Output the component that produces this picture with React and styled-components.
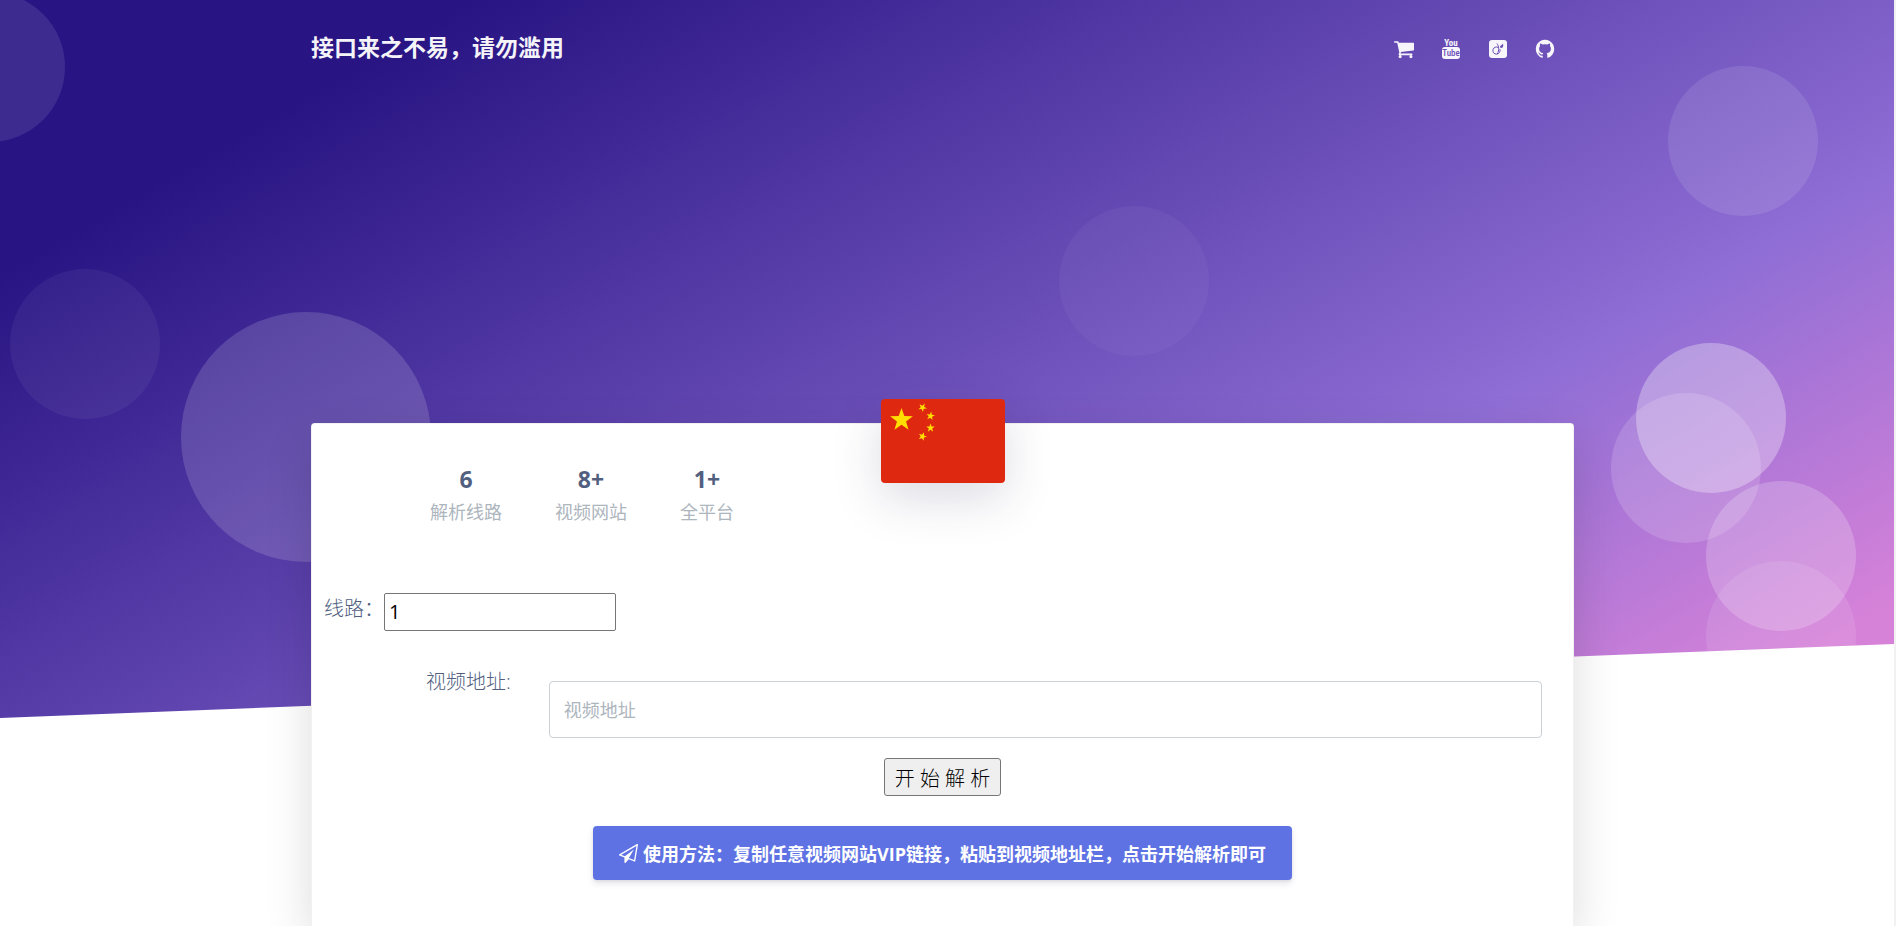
import React, { useState } from "react";
import styled, { createGlobalStyle } from "styled-components";

const stats = [
  { value: "6", label: "解析线路" },
  { value: "8+", label: "视频网站" },
  { value: "1+", label: "全平台" },
];

const bubbles = [
  { size: 150, top: "-8px", left: "-85px", alpha: 0.1 },
  { size: 150, top: "66px", right: "4%", alpha: 0.1 },
  { size: 150, top: "343px", right: "108px", alpha: 0.3 },
  { size: 150, top: "393px", right: "7%", alpha: 0.15 },
  { size: 150, top: "269px", left: "10px", alpha: 0.05 },
  { size: 250, top: "312px", left: "181px", alpha: 0.15 },
  { size: 150, top: "206px", right: "685px", alpha: 0.04 },
  { size: 150, top: "481px", right: "2%", alpha: 0.2 },
  { size: 150, top: "561px", right: "2%", alpha: 0.1 },
];

const CartIcon = () => (
  <svg viewBox="0 0 1664 1792" fill="currentColor" aria-hidden="true">
    <path d="M640 1536q0 52-38 90t-90 38-90-38-38-90 38-90 90-38 90 38 38 90zm896 0q0 52-38 90t-90 38-90-38-38-90 38-90 90-38 90 38 38 90zm128-1088v512q0 24-16.5 42.500t-40.500 21.500l-1044 122q13 60 13 70 0 16-24 64h920q26 0 45 19t19 45-19 45-45 19h-1024q-26 0-45-19t-19-45q0-11 8-31.500t16-36 21.500-40 15.500-29.500l-177-823h-204q-26 0-45-19t-19-45 19-45 45-19h256q16 0 28.500 6.500t19.500 15.500 13 24.500 8 26 5.500 29.500 4.500 26h1201q26 0 45 19t19 45z" />
  </svg>
);

const YoutubeIcon = () => (
  <svg viewBox="0 0 20 22" aria-hidden="true">
    <g
      fontFamily="'Roboto Condensed', 'Liberation Sans Narrow', Roboto, sans-serif"
      textAnchor="middle"
    >
      <text x="10" y="8" fontSize="9" fontWeight="700" fill="currentColor">
        You
      </text>
      <rect x="1" y="9" width="18" height="12" rx="3" fill="currentColor" />
      <text x="10" y="18" fontSize="9" fontWeight="500" fill="#6d50b8">
        Tube
      </text>
    </g>
  </svg>
);

const ViadeoIcon = () => (
  <svg viewBox="0 0 20 22" fill="none" aria-hidden="true">
    <rect x="1" y="2" width="18" height="18" rx="3" fill="currentColor" />
    <path
      d="M10.500 9.600a3.600 3.600 0 1 0 1.300 1.600M9 5.500c1.800 2.500 2.600 6.500 .2 10.500"
      stroke="#6d50b8"
      strokeWidth="1"
    />
    <path
      d="M15 5.500c.6 2 .2 4.300-1.500 4.600-.9 .1-1.500-.6-1.400-1.500 .1-1.500 2.200-1.200 2.900-3.100z"
      fill="#6d50b8"
    />
  </svg>
);

const GithubIcon = () => (
  <svg viewBox="64 0 1664 1792" fill="currentColor" aria-hidden="true">
    <path d="M1664 896q0 251-146.500 451.500t-378.500 277.500q-27 5-39.500-7t-12.500-30v-211q0-97-52-142 57-6 102.500-18t94-39 81-66.500 53-105 20.500-150.500q0-121-79-206 37-91-8-204-28-9-81 11t-92 44l-38 24q-93-26-192-26t-192 26q-16-11-42.500-27t-83.500-38.500-86-13.500q-44 113-7 204-79 85-79 206 0 85 20.500 150t52.500 105 80.500 67 94 39 102.500 18q-40 36-49 103-21 10-45 15t-57 5-65.500-21.500-55.500-62.500q-19-32-48.500-52t-49.500-24l-20-3q-21 0-29 4.500t-5 11.500 9 14 13 12l7 5q22 10 43.500 38t31.500 51l10 23q13 38 44 61.500t67 30 69.500 7 55.500-3.500l23-4q0 38 .5 89t.5 54q0 18-13 30t-40 7q-232-77-378.500-277.500t-146.500-451.500q0-209 103-385.500t279.500-279.500 385.500-103 385.500 103 279.500 279.500 103 385.500z" />
  </svg>
);

const PlaneIcon = () => (
  <svg viewBox="0 0 1792 1792" fill="currentColor" aria-hidden="true">
    <path d="M1764 11q33 24 27 64l-256 1536q-5 29-32 45-14 8-31 8-11 0-24-5l-527-215-298 327q-18 21-47 21-14 0-23-4-19-7-30-23.500t-11-36.500v-452l-472-193q-37-14-40-55-3-39 32-59l1664-960q35-21 68 2zm-342 1499l221-1323-1434 827 336 137 863-639-478 797z" />
  </svg>
);

const starPoints = (cx, cy, r, turn = -90) =>
  Array.from({ length: 10 }, (_, i) => {
    const radius = i % 2 ? r * 0.4 : r;
    const angle = ((turn + i * 36) * Math.PI) / 180;
    return `${cx + radius * Math.cos(angle)},${cy + radius * Math.sin(angle)}`;
  }).join(" ");

const FlagDrawing = () => (
  <svg viewBox="0 0 124 84" role="img" aria-label="中国">
    <rect width="124" height="84" fill="#de2910" />
    <g fill="#ffde00">
      <polygon points={starPoints(20.5, 21, 12)} />
      <polygon points={starPoints(41.5, 8.5, 4.5, -60)} />
      <polygon points={starPoints(49.5, 17, 4.5, -80)} />
      <polygon points={starPoints(49.5, 29, 4.5)} />
      <polygon points={starPoints(41.5, 37.5, 4.5, -70)} />
    </g>
  </svg>
);

const App = () => {
  const [line, setLine] = useState("1");
  const [url, setUrl] = useState("");

  const handleSubmit = (e) => {
    e.preventDefault();
  };

  return (
    <>
      <GlobalStyle />
      <Page>
        <Hero>
          {bubbles.map((b, i) => (
            <Bubble
              key={i}
              $size={b.size}
              $top={b.top}
              $left={b.left}
              $right={b.right}
              $alpha={b.alpha}
            />
          ))}
          <Slope viewBox="0 0 2560 100" preserveAspectRatio="none">
            <polygon points="2560 0 2560 100 0 100" fill="#fff" />
          </Slope>
        </Hero>

        <Content>
          <Header>
            <Brand href="#">接口来之不易，请勿滥用</Brand>
            <Nav>
              <NavLink href="#cart" aria-label="购物车">
                <CartIcon />
              </NavLink>
              <NavLink href="#youtube" aria-label="YouTube">
                <YoutubeIcon />
              </NavLink>
              <NavLink href="#viadeo" aria-label="Viadeo">
                <ViadeoIcon />
              </NavLink>
              <NavLink href="#github" aria-label="GitHub">
                <GithubIcon />
              </NavLink>
            </Nav>
          </Header>

          <Card>
            <Flag>
              <FlagDrawing />
            </Flag>

            <Stats>
              {stats.map((s) => (
                <Stat key={s.label}>
                  <StatValue>{s.value}</StatValue>
                  <StatLabel>{s.label}</StatLabel>
                </Stat>
              ))}
            </Stats>

            <Form onSubmit={handleSubmit}>
              <LineRow>
                <Label htmlFor="line">线路：</Label>
                <LineInput
                  id="line"
                  type="text"
                  value={line}
                  onChange={(e) => setLine(e.target.value)}
                />
              </LineRow>
              <UrlRow>
                <Label htmlFor="url">视频地址:</Label>
                <UrlInput
                  id="url"
                  type="text"
                  placeholder="视频地址"
                  value={url}
                  onChange={(e) => setUrl(e.target.value)}
                />
              </UrlRow>
              <SubmitButton type="submit">开 始 解 析</SubmitButton>
            </Form>

            <UsageButton type="button">
              <PlaneIcon />
              使用方法：复制任意视频网站VIP链接，粘贴到视频地址栏，点击开始解析即可
            </UsageButton>
          </Card>
        </Content>
      </Page>
    </>
  );
};

export default App;

const GlobalStyle = createGlobalStyle`
  *, *::before, *::after {
    box-sizing: border-box;
  }
  body {
    margin: 0;
    background: #fff;
    color: #525f7f;
    font-family: "Open Sans", "Noto Sans CJK SC", sans-serif;
    font-size: 18px;
  }
  input, button {
    font-family: inherit;
  }
`;

const Page = styled.div`
  position: relative;
  display: flex;
  flex-direction: column;
  min-height: 100vh;
  overflow: hidden;
  border-right: 2px solid #f1f1f1;
`;

const Hero = styled.div`
  position: absolute;
  top: 0;
  left: 0;
  right: 0;
  height: 718px;
  overflow: hidden;
  background: linear-gradient(150deg, #281483 15%, #8f6ed5 70%, #d782d9 94%);
`;

const Bubble = styled.span`
  position: absolute;
  top: ${({ $top }) => $top};
  left: ${({ $left }) => $left || "auto"};
  right: ${({ $right }) => $right || "auto"};
  width: ${({ $size }) => $size}px;
  height: ${({ $size }) => $size}px;
  border-radius: 50%;
  background: rgba(255, 255, 255, ${({ $alpha }) => $alpha});
`;

const Slope = styled.svg`
  position: absolute;
  left: 0;
  bottom: 0;
  display: block;
  width: 100%;
`;

const Content = styled.div`
  position: relative;
  display: flex;
  flex: 1;
  flex-direction: column;
  width: 100%;
  max-width: 1272px;
  margin: 0 auto;
  padding-right: 9px;
`;

const Header = styled.header`
  display: flex;
  align-items: center;
  justify-content: space-between;
  height: 96px;
  padding-right: 19px;
`;

const Brand = styled.a`
  padding-bottom: 2px;
  color: #fff;
  font-size: 23px;
  font-weight: 700;
  line-height: 32px;
  text-decoration: none;
  opacity: 0.95;
`;

const Nav = styled.nav`
  display: flex;
  align-items: center;
  gap: 27px;
  padding-top: 2px;
`;

const NavLink = styled.a`
  display: flex;
  color: #fff;
  opacity: 0.95;

  svg {
    width: 20px;
    height: 22px;
  }
`;

const Card = styled.main`
  position: relative;
  display: flex;
  flex: 1;
  flex-direction: column;
  margin-top: 327px;
  padding-top: 39px;
  padding-bottom: 45px;
  background: #fff;
  border: 1px solid rgba(0, 0, 0, 0.05);
  border-bottom: 0;
  border-radius: 4px 4px 0 0;
  box-shadow: 0 16px 48px rgba(0, 0, 0, 0.14);
`;

const Flag = styled.div`
  position: absolute;
  top: -25px;
  left: 50%;
  width: 124px;
  height: 84px;
  overflow: hidden;
  border-radius: 4px;
  box-shadow: 0 16px 48px rgba(50, 50, 93, 0.17);
  transform: translateX(-50%);

  svg {
    display: block;
  }
`;

const Stats = styled.div`
  display: flex;
  gap: 53px;
  padding-left: 118px;
`;

const Stat = styled.div`
  display: flex;
  flex-direction: column;
  gap: 5px;
  text-align: center;
`;

const StatValue = styled.span`
  font-size: 23px;
  font-weight: 700;
  line-height: 32px;
`;

const StatLabel = styled.span`
  color: #adb5bd;
  font-size: 18px;
  line-height: 24px;
`;

const Form = styled.form`
  display: flex;
  flex-direction: column;
  margin-top: 69px;
`;

const LineRow = styled.div`
  display: flex;
  align-items: flex-start;
  padding-left: 12px;
`;

const UrlRow = styled.div`
  display: flex;
  align-items: flex-start;
  gap: 38px;
  margin-top: 35px;
  padding: 0 31px 0 114px;
`;

const Label = styled.label`
  font-size: 20px;
  font-weight: 300;
  line-height: 32px;
`;

const LineInput = styled.input`
  width: 232px;
  height: 38px;
  padding: 0 4px 2px;
  border: 1px solid #767676;
  border-radius: 2px;
  color: #000;
  font-size: 20px;
`;

const UrlInput = styled.input`
  flex: 1;
  height: 57px;
  margin-top: 15px;
  padding: 0 14px;
  border: 1px solid #cad1d7;
  border-radius: 4px;
  color: #8898aa;
  font-size: 18px;

  &::placeholder {
    color: #adb5bd;
    opacity: 1;
  }
`;

const SubmitButton = styled.button`
  align-self: center;
  height: 38px;
  margin-top: 20px;
  padding: 0 10px;
  border: 1px solid #767676;
  border-radius: 3px;
  background: #efefef;
  color: #000;
  font-size: 20px;
  font-weight: 300;
`;

const UsageButton = styled.button`
  display: flex;
  align-items: center;
  align-self: center;
  gap: 5px;
  height: 54px;
  margin-top: 30px;
  padding: 0 26px;
  border: 0;
  border-radius: 4px;
  background: #5e72e4;
  box-shadow: 0 4px 6px rgba(50, 50, 93, 0.11), 0 1px 3px rgba(0, 0, 0, 0.08);
  color: #fff;
  font-size: 18px;
  font-weight: 700;

  svg {
    width: 19px;
    height: 19px;
  }
`;
